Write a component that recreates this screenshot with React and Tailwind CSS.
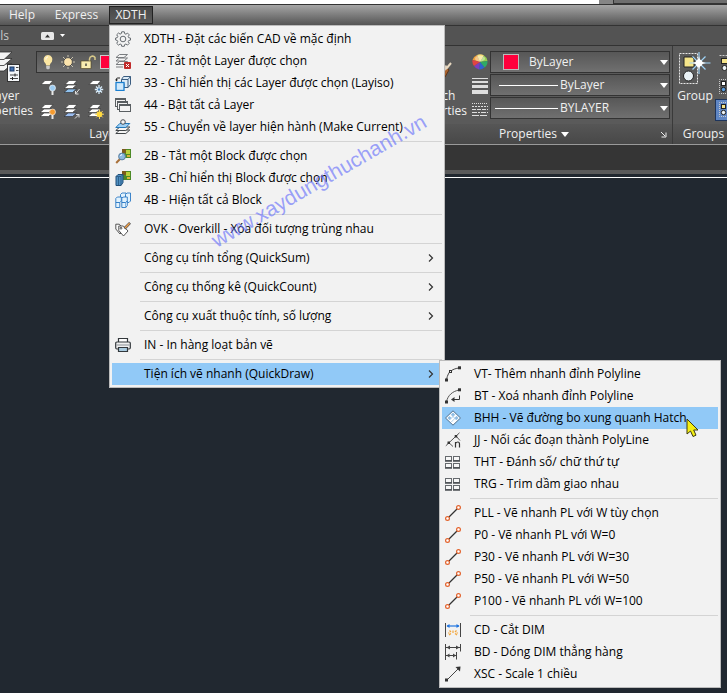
import { useState } from "react";

const Svg = ({ size = 16, className = "", children }) => (
  <svg
    width={size}
    height={size}
    viewBox={`0 0 ${size} ${size}`}
    fill="none"
    aria-hidden="true"
    className={`shrink-0 ${className}`}
  >
    {children}
  </svg>
);

const Caret = () => (
  <svg width="8" height="5" viewBox="0 0 8 5" aria-hidden="true" className="shrink-0">
    <path d="M0 0h8L4 5z" fill="#fff" />
  </svg>
);

/* ---------- menu icons ---------- */

const GearIcon = () => (
  <Svg>
    <path
      d="M6.7 .8h2.6l.4 1.9 1.2.5 1.6-1.1 1.8 1.8-1.1 1.6.5 1.2 1.8.4v2l-1.8.4-.5 1.2 1.1 1.6-1.8 1.8-1.6-1.1-1.2.5-.4 1.8H6.7l-.4-1.8-1.2-.5-1.6 1.1-1.8-1.8 1.1-1.6-.5-1.2L.6 9V7l1.7-.4.5-1.2-1.1-1.6L3.5 2l1.6 1.1 1.2-.5z"
      stroke="#666b70"
    />
    <circle cx="8" cy="8" r="2.8" stroke="#666b70" />
  </Svg>
);

const LayerOffIcon = () => (
  <Svg>
    <g stroke="#7a7d80" fill="#f4f4f4">
      <path d="M1 11.5l3.5-3h8l-3.5 3z" />
      <path d="M1 8l3.5-3h8L9 8z" />
      <path d="M1 4.5l3.5-3h8L9 4.500z" />
    </g>
    <path d="M1 14h7" stroke="#7a7d80" />
    <rect x="9" y="9" width="7" height="7" rx="1" fill="#c02a2a" />
    <path d="M11 11l3 3m0-3l-3 3" stroke="#fff" />
  </Svg>
);

const LayerIsoIcon = () => (
  <Svg>
    <path d="M6.500 4.500l2-3h7v8l-2.500 3H9v-4H6.500z" stroke="#3b5d80" fill="#dcebf7" />
    <path d="M6.500 4.500h6.500v8M13 4.500l2.500-3" stroke="#3b5d80" />
    <rect x="1" y="7.500" width="8" height="8" fill="#cfe8fb" stroke="#1a7fd0" strokeWidth="1.300" />
    <path d="M1.500 5.500V4q0-1 1-1H5" stroke="#222" />
    <path d="M0 4.500h3L1.500 6.500z" fill="#222" />
  </Svg>
);

const LayersOnIcon = () => (
  <Svg>
    <g fill="#f4f4f4" stroke="#5a5f62">
      <rect x=".5" y="1.500" width="10" height="8" />
      <path d="M.5 2.500h10" />
      <rect x="2.500" y="4.500" width="10" height="8" />
      <path d="M2.500 5.500h10" />
      <rect x="4.500" y="7.500" width="11" height="7" />
      <path d="M4.500 8.500h11" />
    </g>
  </Svg>
);

const LayerCurrentIcon = () => (
  <Svg>
    <path d="M.8 14.500l4-3.500h10l-4 3.500z" fill="#f4f4f4" stroke="#3f4447" />
    <path d="M.8 11.500l4-3.500h10l-4 3.500z" fill="#f4f4f4" stroke="#3f4447" />
    <path d="M.8 8.500L4.800 4.500h10l-4 4z" fill="#9fd0f5" stroke="#2277b8" />
    <circle cx="8" cy="3" r="2.300" fill="#f4f4f4" stroke="#4a4f55" />
  </Svg>
);

const BlockPicture = () => (
  <>
    <rect x="7" y="1" width="9" height="9" fill="#4d8a26" />
    <rect x="11" y="2" width="4" height="4" fill="#b9cf3a" />
    <path d="M7 1h4v4H7z" fill="#7c5a1c" />
    <path d="M12 7h3v2h-3z" fill="#d9b23a" />
  </>
);

const BlockOffIcon = () => (
  <Svg>
    <BlockPicture />
    <path d="M5 11L1.200 15" stroke="#a9713a" strokeWidth="2" />
    <circle cx="7" cy="8.500" r="3.400" fill="#8db9e0" stroke="#5c7f9f" />
    <path d="M5.500 8a2 2 0 011.500-1.500" stroke="#fff" />
  </Svg>
);

const BlockIsoIcon = () => (
  <Svg>
    <BlockPicture />
    <path d="M1 6.500l2-2h5v8l-2 3H1z" fill="#4f8fc0" stroke="#234f78" />
    <path d="M1 6.500h5v9M6 6.500l2-2M3.500 7v8" stroke="#234f78" strokeWidth=".7" />
  </Svg>
);

const BlockAllIcon = () => (
  <Svg>
    <g fill="#e2f2fd" stroke="#2a78c4" strokeWidth=".9">
      <path d="M5.500 2.500L7 1h4v3L9.500 5.500h-4z" />
      <path d="M10.500 2.500L12 1h3.500v8L14 10.500h-3.500z" />
      <path d="M.8 6.500L2.300 5h4v4L4.800 10.500h-4z" />
      <path d="M6.800 6.500L8.300 5h4v4l-1.500 1.500h-4z" />
      <path d="M.8 10.500h4v5h-4zM6.800 10.500h4v5h-4z" />
      <path d="M10.800 10.500l1.500-1.500v4.500l-1.500 2" />
    </g>
  </Svg>
);

const OverkillIcon = () => (
  <Svg>
    <g stroke="#444" strokeWidth=".9" strokeLinejoin="round">
      <path d="M.8 3.200h3.500L9 8.500l-4 4.500-4.200-5z" fill="#f7f7f7" />
      <path d="M3.800 5h4.500l4.700 5-4.500 5-4.700-5.500z" fill="#fff" />
      <circle cx="6" cy="7.200" r=".9" />
    </g>
    <path d="M15 1.800L9.500 7.500" stroke="#444" strokeWidth="2.600" />
    <path d="M14.600 2.200L10 7" stroke="#f0a04c" strokeWidth="1.500" />
  </Svg>
);

const PrinterIcon = () => (
  <Svg>
    <path d="M3.500 5V1.500h9V5" fill="#fff" stroke="#33383c" strokeWidth="1.200" />
    <rect x=".7" y="5" width="14.600" height="7" rx="1.200" fill="#f0f0f0" stroke="#33383c" strokeWidth="1.200" />
    <path d="M1.500 8h13" stroke="#8a9096" />
    <path d="M3.500 10.500h9v4h-9z" fill="#a9cbe0" stroke="#33383c" strokeWidth="1.200" />
  </Svg>
);

/* ---------- submenu icons ---------- */

const VertexAddIcon = () => (
  <Svg>
    <path d="M1.500 13.500C2.500 9 4 6 6 4.800 8.500 3.200 11 2.300 14 2" stroke="#444" />
    <g fill="#f2f2f2" stroke="#333">
      <rect x=".5" y="13" width="2" height="2" />
      <rect x="4.500" y="4.500" width="2" height="2" />
      <rect x="13.500" y=".8" width="2" height="2" />
    </g>
  </Svg>
);

const VertexRemoveIcon = () => (
  <Svg>
    <path d="M1.500 13.500C3 7.500 7 3.500 14 2" stroke="#555" />
    <g fill="#f2f2f2" stroke="#333">
      <rect x=".5" y="13" width="2" height="2" />
      <rect x="13.500" y=".8" width="2" height="2" />
    </g>
    <path d="M14.500 7.500v4H7.500" stroke="#333" />
    <path d="M9.500 9v5L6 11.500z" fill="#333" />
  </Svg>
);

const HatchIcon = () => (
  <Svg>
    <path d="M8 .8L15.500 8 8 15.200.5 8z" fill="#fff" stroke="#4c6f8e" />
    <path d="M8 2.500l2 2-2 2-2-2zM4.500 6l2 2-2 2-2-2zM11.500 6l2 2-2 2-2-2z" fill="#8cbce4" />
    <path d="M10 4.500l-5.500 5.500M12 6.300L6.300 12M6 4.500l5.500 5.500" stroke="#9cc3e4" strokeWidth=".8" />
  </Svg>
);

const JoinIcon = () => (
  <Svg>
    <path d="M.8 13.800L14.500.8M3.700 10.500L8 14.500M11 4l4 4.500" stroke="#555" />
    <path d="M2.500 9.500H5V12H2.500zM9.700 3h2.500v2.500H9.700z" fill="#333" />
    <path d="M10.500 15.500V10M10.500 11.500q1-1.500 2.300-1.500 1.700 0 1.700 2v3.500" stroke="#333" strokeWidth="1.200" />
  </Svg>
);

const GridIcon = () => (
  <Svg>
    <g stroke="#666a6e" fill="#f7f7f7">
      <rect x=".5" y="2.500" width="6" height="4" />
      <rect x="8.500" y="2.500" width="6" height="4" />
      <rect x=".5" y="9.500" width="6" height="4" />
      <rect x="8.500" y="9.500" width="6" height="4" />
    </g>
    <path d="M0 7h7M8 7h7M0 14h7M8 14h7" stroke="#4b4f53" strokeWidth="1.500" />
  </Svg>
);

const LineIcon = () => (
  <Svg>
    <path d="M3.500 12.500l9-9" stroke="#333" strokeWidth="1.300" />
    <circle cx="2.500" cy="13.500" r="1.900" fill="#fff" stroke="#e2622c" strokeWidth="1.200" />
    <circle cx="13.500" cy="2.500" r="1.900" fill="#fff" stroke="#e2622c" strokeWidth="1.200" />
  </Svg>
);

const DimCutIcon = () => (
  <Svg>
    <path d="M.5 1v14M15.500 1v14" stroke="#444" />
    <path d="M2 4h12" stroke="#1f74e0" strokeWidth="1.200" />
    <path d="M1.500 4l3-2v4zM14.500 4l-3-2v4z" fill="#1f74e0" />
    <path d="M4 13l2-1.500M8 11V8.500M12 13l-2-1.500M4.500 8.500L6 10M11.500 8.500L10 10M3 11h1.500M11.500 11H13" stroke="#f3a63b" strokeWidth="1.200" />
  </Svg>
);

const DimAlignIcon = () => (
  <Svg>
    <path d="M.5 0v16M15.500 0v7.500M11.500 8v7.500" stroke="#444" />
    <path d="M1 3.500h14M1 11.500h10" stroke="#444" />
    <path d="M1.500 3.500L5 1.500v4zM14.500 3.500L11 1.500v4zM1.500 11.500l3-2v4zM11 11.500l-3-2v4z" fill="#444" />
  </Svg>
);

const ScaleIcon = () => (
  <Svg>
    <path d="M3 13L13.500 2.500" stroke="#444" />
    <path d="M10.500 1L15.500.5 15 5.500z" fill="#333" />
    <rect x=".5" y="13" width="2" height="2" fill="#f2f2f2" stroke="#333" />
  </Svg>
);

/* ---------- ribbon icons ---------- */

const LayerPropsIcon = () => (
  <svg width="42" height="33" viewBox="5 0 42 33" fill="none" aria-hidden="true">
    <g fill="#f4f4f4" stroke="#2e2e2e" strokeWidth=".8">
      <path d="M12 20l8-7h14l-8 7z" />
      <path d="M12 14.500l8-7h14l-8 7z" />
      <path d="M12 8.500l8-7.500h14l-8 7.500z" />
    </g>
    <rect x="29.500" y="13.500" width="12" height="17" fill="#f4f6f8" stroke="#333" />
    <rect x="32" y="16" width="4" height="4" fill="#3f6fb0" stroke="#1e3a66" />
    <path d="M38 16.500h2.500M38 19.500h2.500M32 24h8M32 27.500h8" stroke="#444" />
    <path d="M37 22.500v3M34.500 26v3" stroke="#222" />
  </svg>
);

// stack of sheets shared by the small layer tools
const Sheets = ({ count, tint = "#fff" }) => (
  <g stroke="#2c2c2c" strokeWidth=".6">
    {count > 2 && <path d="M0 13.500L4 10h8.500l-4 3.500z" fill={tint} />}
    {count > 1 && <path d="M0 9.500L4 6h8.500l-4 3.500z" fill="#fff" />}
    <path d="M1 5.500L5 1.500h8L9.500 5.500z" fill="#fff" />
  </g>
);

const Bulb = ({ color }) => (
  <>
    <circle cx="12.500" cy="9" r="3" fill={color} stroke="#fff" strokeWidth=".6" />
    <path d="M12.500 12v4" stroke="#e8e8e8" strokeWidth="2" />
  </>
);

const layerTools = [
  { label: "Off", art: <><Sheets count={1} /><Bulb color="#9ccbf0" /></> },
  { label: "Isolate", art: <><Sheets count={3} tint="#8fc1ee" /><path d="M15.500 10l-4 5m0-3v3h3" stroke="#ddd" /></> },
  {
    label: "Freeze",
    art: (
      <>
        <Sheets count={1} />
        <path d="M11 6v9M6.800 10.500h8.400M8 7.500l6 6M14 7.500l-6 6" stroke="#d8ecfa" strokeWidth="1.300" />
        <circle cx="11" cy="10.500" r="1.200" fill="#4d7fae" />
      </>
    ),
  },
  { label: "Turn All Layers On", art: <><Sheets count={3} /><Bulb color="#f59a2e" /></> },
  { label: "Unisolate", art: <><Sheets count={3} tint="#9bbdf0" /><path d="M11 15.500l4-4m-3 0h3v3" stroke="#ddd" /></> },
  {
    label: "Thaw",
    art: (
      <>
        <Sheets count={3} />
        <path d="M11.500 6.500v9.500M7 11.200h9M8.300 8l6.400 6.400M14.700 8l-6.400 6.400" stroke="#f3d36a" />
        <circle cx="11.500" cy="11.200" r="2.800" fill="#ffd93d" />
      </>
    ),
  },
];

const BulbIcon = () => (
  <Svg>
    <path d="M8 1a4.500 4.500 0 00-4 6.500c.8 1.300 2 2.300 2.200 4h3.600c.2-1.700 1.400-2.700 2.200-4A4.500 4.500 0 008 1z" fill="#fbe6a2" />
    <path d="M6 5.500a2 2 0 012-2.500" stroke="#fff" />
    <path d="M6.200 12h3.600v2.500L8 15.500l-1.800-1z" fill="#c9c9c9" />
  </Svg>
);

const SunIcon = () => (
  <Svg>
    <path d="M8 1v14M1 8h14M3 3l10 10M13 3L3 13" stroke="#c9c3b0" />
    <circle cx="8" cy="8" r="4.400" fill="#fbe3ac" stroke="#4b4b4b" />
  </Svg>
);

const LockIcon = () => (
  <Svg>
    <path d="M9.500 7.500V5a3 3 0 015.500-1.500V6" stroke="#d8c98a" strokeWidth="1.500" />
    <rect x="1" y="7" width="10" height="7.500" fill="#f8ecb0" stroke="#4b3f1a" strokeWidth=".6" />
    <path d="M6 9.500v2.500" stroke="#333" strokeWidth="1.300" />
  </Svg>
);

const ColorWheelIcon = () => (
  <Svg>
    <path d="M8 8L.5 6A7.500 7.500 0 015 1z" fill="#f0a23c" />
    <path d="M8 8L5 1a7.500 7.500 0 017 .5z" fill="#f4dd73" />
    <path d="M8 8l4-6.500A7.500 7.500 0 0115.500 7z" fill="#97cf52" />
    <path d="M8 8l7.500-1a7.500 7.500 0 01-3 6.500z" fill="#2faa66" />
    <path d="M8 8l4.500 5.500A7.500 7.500 0 017 15.500z" fill="#2f63cf" />
    <path d="M8 8l-1 7.500a7.500 7.500 0 01-5-3.500z" fill="#7b3fc2" />
    <path d="M8 8l-6 4A7.500 7.500 0 01.5 6z" fill="#e24343" />
    <ellipse cx="8" cy="4.500" rx="5" ry="3" fill="#fff" opacity=".4" />
  </Svg>
);

const LineweightIcon = () => (
  <Svg>
    <path d="M0 0h16v1H0zM0 3h16v2H0zM0 7h16v3H0zM0 12h16v4H0z" fill="#dedede" />
  </Svg>
);

const LinetypeIcon = () => (
  <Svg>
    <g stroke="#dedede">
      <path d="M0 1.500h16" strokeDasharray="1 1" />
      <path d="M0 4.500h16" strokeDasharray="2 1" />
      <path d="M0 7.500h16" strokeDasharray="4 1" />
      <path d="M0 10.500h16" strokeDasharray="5 1 2 1" />
      <path d="M0 13.500h16" strokeDasharray="7 1" />
    </g>
  </Svg>
);

const MatchIcon = () => (
  <svg width="32" height="32" viewBox="0 0 32 32" fill="none" aria-hidden="true">
    <path d="M8 31l10-12 5 4-9 9z" fill="#a8683a" />
    <path d="M18 19l4-5 5 4-4 7z" fill="#a8622f" stroke="#5d3517" />
    <path d="M21 19l4-5" stroke="#d9cdbb" strokeWidth="3" />
    <path d="M24 17l5-6" stroke="#e8d8c0" strokeWidth="2" />
  </svg>
);

const GroupIcon = () => (
  <svg width="32" height="34" viewBox="0 0 32 34" fill="none" aria-hidden="true">
    <rect x=".5" y="2.500" width="18" height="30" stroke="#e8e8e8" strokeDasharray="2 1" />
    <path d="M5 6h8l2 2v8H5z" fill="#f5e58a" stroke="#222" />
    <circle cx="9.500" cy="25" r="5" fill="#e9f1f5" stroke="#222" />
    <path d="M20 1v22M10.500 12h21M13.500 5.500l13 13M26.500 5.500l-13 13" stroke="#9fd3f7" strokeWidth="1.200" />
    <path d="M20 5l1.500 5.500L27 12l-5.500 1.500L20 19l-1.500-5.500L13 12l5.500-1.500z" fill="#fff" />
    <circle cx="20" cy="12" r="3.500" fill="#fff" />
  </svg>
);

const GroupMiniIcon = ({ top, bottom = "#eef4f8" }) => (
  <Svg>
    <path d="M15 .5H.5v14H15" stroke="#ccc" strokeDasharray="1 1" />
    <rect x="2.500" y="2.500" width="4" height="4" fill={top} stroke="#222" />
    <circle cx="4.500" cy="10.500" r="2.200" fill={bottom} stroke="#222" />
    <rect x="10" y="2.500" width="4" height="4" fill="#fff" stroke="#222" />
  </Svg>
);

const UngroupIcon = () => (
  <Svg>
    <path d="M.5 .5H15" stroke="#ccc" strokeDasharray="2 1" />
    <rect x="2.500" y="3.500" width="10" height="5" fill="#f5e58a" stroke="#222" />
    <circle cx="5.500" cy="13" r="2.500" fill="#eef4f8" stroke="#222" />
  </Svg>
);

/* ---------- data ---------- */

const quickDrawItems = [
  { label: "VT- Thêm nhanh đỉnh Polyline", icon: VertexAddIcon },
  { label: "BT - Xoá nhanh đỉnh Polyline", icon: VertexRemoveIcon },
  { label: "BHH - Vẽ đường bo xung quanh Hatch", icon: HatchIcon },
  { label: "JJ - Nối các đoạn thành PolyLine", icon: JoinIcon },
  { label: "THT - Đánh số/ chữ thứ tự", icon: GridIcon },
  { label: "TRG - Trim dầm giao nhau", icon: GridIcon },
  null,
  { label: "PLL - Vẽ nhanh PL với W tùy chọn", icon: LineIcon },
  { label: "P0 - Vẽ nhanh PL với W=0", icon: LineIcon },
  { label: "P30 - Vẽ nhanh PL với W=30", icon: LineIcon },
  { label: "P50 - Vẽ nhanh PL với W=50", icon: LineIcon },
  { label: "P100 - Vẽ nhanh PL với W=100", icon: LineIcon },
  null,
  { label: "CD - Cắt DIM", icon: DimCutIcon },
  { label: "BD - Dóng DIM thẳng hàng", icon: DimAlignIcon },
  { label: "XSC - Scale 1 chiều", icon: ScaleIcon },
];

const mainItems = [
  { label: "XDTH - Đặt các biến CAD về mặc định", icon: GearIcon },
  { label: "22 - Tắt một Layer được chọn", icon: LayerOffIcon },
  { label: "33 - Chỉ hiển thị các Layer được chọn (Layiso)", icon: LayerIsoIcon },
  { label: "44 - Bật tất cả Layer", icon: LayersOnIcon },
  { label: "55 - Chuyển về layer hiện hành (Make Current)", icon: LayerCurrentIcon },
  null,
  { label: "2B - Tắt một Block được chọn", icon: BlockOffIcon },
  { label: "3B - Chỉ hiển thị Block được chọn", icon: BlockIsoIcon },
  { label: "4B - Hiện tất cả Block", icon: BlockAllIcon },
  null,
  { label: "OVK - Overkill - Xóa đối tượng trùng nhau", icon: OverkillIcon },
  null,
  { label: "Công cụ tính tổng (QuickSum)", submenu: [] },
  null,
  { label: "Công cụ thống kê (QuickCount)", submenu: [] },
  null,
  { label: "Công cụ xuất thuộc tính, số lượng", submenu: [] },
  null,
  { label: "IN - In hàng loạt bản vẽ", icon: PrinterIcon },
  null,
  { label: "Tiện ích vẽ nhanh (QuickDraw)", submenu: quickDrawItems },
];

/* ---------- menus ---------- */

const MenuItem = ({ item, active, onHover, children }) => {
  const Icon = item.icon;
  return (
    <li role="none" className="relative">
      <button
        type="button"
        role="menuitem"
        onMouseEnter={onHover}
        className={`flex h-[22px] w-full items-center pl-[3px] pr-2 text-left whitespace-nowrap ${active ? "bg-[#91c9f7]" : ""}`}
      >
        <span className="mr-[13px] w-4 shrink-0">{Icon && <Icon />}</span>
        <span className="flex-1">{item.label}</span>
        {item.submenu && (
          <svg width="6" height="8" viewBox="0 0 6 8" fill="none" aria-hidden="true">
            <path d="M1 .5L4.500 4 1 7.500" stroke="#333" strokeWidth="1.200" />
          </svg>
        )}
      </button>
      {children}
    </li>
  );
};

const Menu = ({ items, active, onSelect, renderSubmenu }) => (
  <ul role="menu" className="border border-[#bcbcbc] bg-[#f2f2f2] p-0.5 text-black">
    {items.map((item, i) =>
      item ? (
        <MenuItem key={item.label} item={item} active={active === item.label} onHover={() => onSelect(item.label)}>
          {renderSubmenu && active === item.label && renderSubmenu(item)}
        </MenuItem>
      ) : (
        <li key={i} role="separator" className="my-[3px] ml-7 h-px bg-[#d4d4d4]" />
      )
    )}
  </ul>
);

const Pointer = () => (
  <svg width="14" height="20" viewBox="0 0 14 20" aria-hidden="true" className="absolute top-[58px] left-[247px]">
    <path d="M1 1v15l3.500-3 2.500 5.500 3-1.300L7.700 12H12z" fill="#f4ee12" stroke="#3c3a10" />
  </svg>
);

const XdthMenu = () => {
  const [active, setActive] = useState("Tiện ích vẽ nhanh (QuickDraw)");
  const [subActive, setSubActive] = useState("BHH - Vẽ đường bo xung quanh Hatch");

  return (
    <div className="absolute top-[18px] -left-px z-10 w-[336px]">
      <Menu
        items={mainItems}
        active={active}
        onSelect={setActive}
        renderSubmenu={(item) =>
          item.submenu?.length > 0 && (
            <div className="absolute -top-[3px] left-[327px] z-20 w-[282px]">
              <Menu items={item.submenu} active={subActive} onSelect={setSubActive} />
              <Pointer />
            </div>
          )
        }
      />
      <span className="pointer-events-none absolute top-[142px] left-[88px] -rotate-30 font-['Liberation_Sans',sans-serif] text-[21px] text-[#6670fa]/65">
        www.xaydungthuchanh.vn
      </span>
    </div>
  );
};

/* ---------- ribbon ---------- */

const Panel = ({ title, launcher, className, children }) => (
  <section className={`flex shrink-0 flex-col border-r border-[#3a3a3a] ${className}`}>
    <div className="flex h-[78px] items-start pt-[5px]">{children}</div>
    <div className="flex h-5 items-center justify-center bg-linear-to-b from-[#565656] to-[#484848] pl-1">
      {title && (
        <button type="button" className="flex flex-1 items-center justify-center gap-1">
          {title} <Caret />
        </button>
      )}
      {launcher && (
        <button type="button" aria-label={`${title} settings`} className="mr-1 -ml-2 w-2">
          <svg width="7" height="7" viewBox="0 0 7 7" fill="none" aria-hidden="true">
            <path d="M1 1l4 4M6 1.500V6H1.500" stroke="#eee" />
          </svg>
        </button>
      )}
    </div>
  </section>
);

const Combo = ({ label, value, lead }) => (
  <label className="flex h-[22px] items-center border border-[#333] bg-linear-to-b from-[#575757] to-[#707070] pr-px">
    {lead}
    <select aria-label={label} defaultValue={value} className="min-w-0 flex-1 appearance-none bg-transparent outline-none">
      <option>{value}</option>
    </select>
    <Caret />
  </label>
);

const BigButton = ({ icon, lines, className }) => (
  <button type="button" className={`flex shrink-0 flex-col items-center leading-[15px] ${className}`}>
    <span className="mb-1 flex h-[33px] items-center">{icon}</span>
    {lines.map((line) => (
      <span key={line}>{line}</span>
    ))}
  </button>
);

const Ribbon = () => (
  <div className="flex h-[99px] overflow-hidden border-b border-[#9a9a9a] bg-[#5a5a5a]">
    <Panel title="Layers" className="w-56">
      <BigButton icon={<LayerPropsIcon />} lines={["Layer", "Properties"]} className="-ml-6 w-14" />
      <div className="ml-1 flex-1">
        <Combo
          label="Layer"
          value="0"
          lead={
            <span className="flex items-center gap-1 pl-[3px] pr-2">
              <BulbIcon />
              <SunIcon />
              <LockIcon />
              <span className="size-[14px] border border-[#ccc] bg-[#ff003c]" />
            </span>
          }
        />
        <div className="mt-1.5 ml-1 grid w-[72px] grid-cols-3 gap-y-2">
          {layerTools.map((tool) => (
            <button key={tool.label} type="button" aria-label={tool.label}>
              <Svg>{tool.art}</Svg>
            </button>
          ))}
        </div>
      </div>
    </Panel>
    <Panel className="w-[172px]" />
    <Panel title="Properties" launcher className="w-[277px]">
      <BigButton icon={<MatchIcon />} lines={["Match", "Properties"]} className="ml-3.5 w-14" />
      <div className="ml-1.5 flex w-[18px] flex-col gap-2 pt-[3px]">
        <ColorWheelIcon />
        <LineweightIcon />
        <LinetypeIcon />
      </div>
      <div className="flex w-[180px] flex-col gap-px">
        <Combo
          label="Object color"
          value="ByLayer"
          lead={<span className="mr-2.5 ml-3 size-4 border border-[#bbb] bg-[#ff003c]" />}
        />
        <Combo label="Lineweight" value="ByLayer" lead={<span className="mr-0.5 ml-2 h-px w-[59px] bg-white" />} />
        <Combo label="Linetype" value="BYLAYER" lead={<span className="mr-0.5 ml-1 h-px w-[63px] bg-white" />} />
      </div>
    </Panel>
    <Panel title="Groups" className="w-[70px]">
      <BigButton icon={<GroupIcon />} lines={["Group"]} className="ml-1 w-9" />
      <div className="ml-0.5 flex flex-col">
        <button type="button" aria-label="Ungroup" className="flex h-6 w-6 items-center pl-1">
          <UngroupIcon />
        </button>
        <button type="button" aria-label="Group edit" className="flex h-6 w-6 items-center pl-1">
          <GroupMiniIcon top="#fff" bottom="#5aa0e6" />
        </button>
        <button
          type="button"
          aria-label="Group selection on"
          className="flex h-[22px] w-6 items-center border border-[#1e355c] bg-[#5f86c4] pl-[3px]"
        >
          <GroupMiniIcon top="#f5e58a" />
        </button>
      </div>
    </Panel>
  </div>
);

const App = () => (
  <div className="flex min-h-screen flex-col overflow-hidden bg-[#212830] font-['Open_Sans','Noto_Sans',sans-serif] text-xs text-[#f0f0f0]">
    <div className="flex h-[5px] border-b border-[#333] bg-white">
      <div className="ml-auto w-3.5 bg-[#858585]" />
      <div className="w-[114px] border-b border-l border-[#333] bg-[#6e6e6e]" />
    </div>

    <nav className="flex h-[21px] items-center border-b border-[#333] bg-linear-to-b from-[#a6a6a6] to-[#555]">
      <button type="button" className="w-11">Help</button>
      <button type="button" className="w-[65px]">Express</button>
      <div className="relative h-[18px] w-11 border border-[#222] bg-linear-to-b from-[#474747] to-[#5c5c5c]">
        <button type="button" aria-haspopup="menu" aria-expanded="true" className="h-full w-full leading-4">
          XDTH
        </button>
        <XdthMenu />
      </div>
    </nav>

    <div className="flex h-5 items-center border-b border-[#333] bg-[#535353]">
      <button type="button" className="-ml-[21px] w-[30px] text-right text-[#c8c8c8]">Tools</button>
      <button type="button" aria-label="Minimize ribbon" className="ml-8 flex items-center gap-1.5">
        <svg width="13" height="8" viewBox="0 0 13 8" aria-hidden="true">
          <rect width="13" height="8" rx="1.500" fill="#e8e8e8" />
          <path d="M4 5.500h5L6.500 2.500z" fill="#333" />
        </svg>
        <svg width="5" height="3" viewBox="0 0 5 3" aria-hidden="true">
          <path d="M0 0h5L2.500 3z" fill="#fff" />
        </svg>
      </button>
    </div>

    <Ribbon />

    <div className="h-[29px] border-b-4 border-[#5a5a5a] bg-[#353535]" />
    <main className="mt-[3px] flex-1 border-t border-white" />
  </div>
);

export default App;
